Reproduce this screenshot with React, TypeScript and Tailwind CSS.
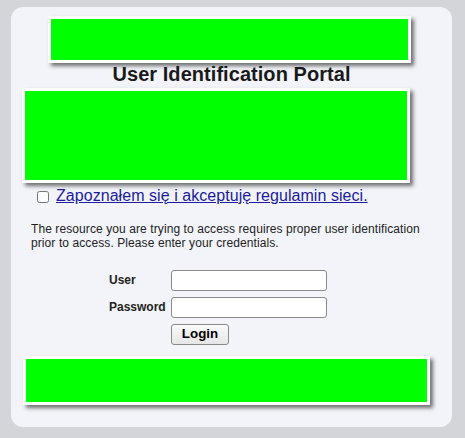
import React from "react";

const font = { fontFamily: '"Liberation Sans", Arial, sans-serif' };

function GreenBox({ className }: { className: string }) {
  return (
    <div
      className={`bg-[#00ff00] border-[3px] border-white shadow-[3px_3px_4px_rgba(0,0,0,0.55)] ${className}`}
    />
  );
}

export default function App() {
  return (
    <div
      className="w-[465px] h-[438px] bg-[#d3d5d9] pt-[7px] pl-[11px] overflow-hidden"
      style={font}
    >
      <div className="w-[441px] h-[420px] rounded-[12px] bg-[#f2f4f9] flex flex-col">
        <GreenBox className="ml-[37px] mt-[9px] w-[363px] h-[47px]" />
        <h1 className="text-[20px] leading-[22px] font-bold text-[#1a1a1a] text-center w-[441px] tracking-[0.05px]">
          User Identification Portal
        </h1>
        <GreenBox className="ml-[11px] mt-[3px] w-[388px] h-[95px]" />
        <div className="flex items-center ml-[26px] mt-[4px] h-[18px]">
          <input
            type="checkbox"
            className="m-0 w-[12px] h-[12px] mt-[1px]"
          />
          <a
            href="#"
            className="ml-[7px] text-[16px] leading-[18px] text-[#1c1c9c] underline tracking-[0.05px]"
          >
            Zapoznałem się i akceptuję regulamin sieci.
          </a>
        </div>
        <p className="ml-[20px] mt-[18px] w-[400px] text-[12px] leading-[13.8px] text-[#222] tracking-[0.09px]">
          The resource you are trying to access requires proper user
          identification prior to access. Please enter your credentials.
        </p>
        <div className="ml-[98px] mt-[19px] grid grid-cols-[62px_auto] gap-y-[6px] items-center text-[12px] text-[#222]">
          <label className="font-bold">User</label>
          <input
            type="text"
            className="w-[156px] h-[21px] border border-[#8a8a8a] rounded-[3px] bg-white"
          />
          <label className="font-bold">Password</label>
          <input
            type="password"
            className="w-[156px] h-[21px] border border-[#8a8a8a] rounded-[3px] bg-white"
          />
          <span />
          <button className="w-[58px] h-[21px] border border-[#8a8a8a] rounded-[3px] bg-gradient-to-b from-[#fafafa] to-[#e6e6e6] text-[13.33px] font-bold text-black leading-none">
            Login
          </button>
        </div>
        <GreenBox className="ml-[12px] mt-[11px] w-[407px] h-[49px]" />
      </div>
    </div>
  );
}
